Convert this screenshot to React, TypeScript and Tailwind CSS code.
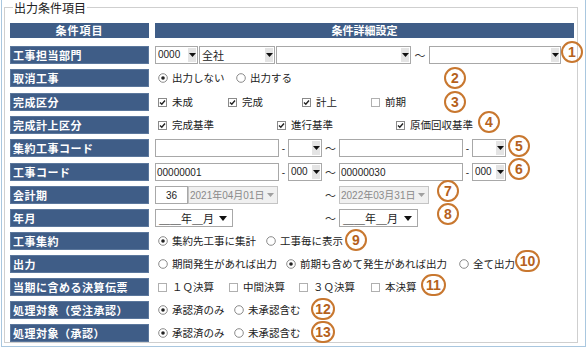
import React from 'react'

const jp = "font-['Noto_Sans_CJK_JP',sans-serif]"
const num = "font-['Liberation_Sans','Noto_Sans_CJK_JP',sans-serif]"

function Arrow({ color = '#111' }: { color?: string }) {
  return (
    <svg width="7" height="4" viewBox="0 0 7 4">
      <polygon points="0,0 7,0 3.5,4" fill={color} />
    </svg>
  )
}

function Select({ w, value, text = 'text-[11px]' }: { w: string; value?: string; text?: string }) {
  return (
    <div className={`${w} h-[18px] shrink-0 border border-[#a8a8a8] bg-white flex items-center`}>
      <span className={`flex-1 pl-[2px] text-[#222] ${text} leading-[14px] whitespace-nowrap overflow-hidden`}>{value}</span>
      <span className="w-[8px] h-[14px] mr-px bg-[#e4e4e4] flex items-center justify-center">
        <Arrow />
      </span>
    </div>
  )
}

function Input({ w, value, center }: { w: string; value?: string; center?: boolean }) {
  return (
    <div
      className={`${w} h-[18px] shrink-0 border border-[#a8a8a8] bg-white flex items-center ${center ? 'justify-center' : 'pl-[1px]'} ${num} text-[10px] text-[#222]`}
    >
      {value}
    </div>
  )
}

function DateSelect({ value }: { value: string }) {
  return (
    <div className={`w-[90px] h-[18px] shrink-0 border border-[#c4c4c4] bg-[#f0f0f0] flex items-center ${num} text-[10px] text-[#8a8a8a]`}>
      <span className="flex-1 pl-[1px]">{value}</span>
      <span className="w-[10px] flex items-center justify-center mr-[2px]">
        <Arrow color="#a0a0a0" />
      </span>
    </div>
  )
}

function YmSelect({ w }: { w: string }) {
  return (
    <div className={`${w} h-[18px] shrink-0 border border-[#a8a8a8] bg-white flex items-center ${jp} text-[11px] text-[#222]`}>
      <span className="flex-1 pl-[3px]">＿＿年＿月</span>
      <span className="w-[12px] flex items-center justify-center mr-[3px]">
        <svg width="8" height="5" viewBox="0 0 8 5">
          <polygon points="0,0 8,0 4,5" fill="#111" />
        </svg>
      </span>
    </div>
  )
}

function Check({ on, label, w }: { on?: boolean; label: string; w?: string }) {
  return (
    <div className={`${w ?? ''} shrink-0 flex items-center gap-[5px]`}>
      <svg width="9" height="9" viewBox="0 0 9 9">
        <rect x="0.5" y="0.5" width="8" height="8" fill="#fff" stroke={on ? '#8a8a8a' : '#b0b0b0'} />
        {on && <path d="M2 4.5 L3.8 6.3 L7 2.5" stroke="#222" strokeWidth="1.4" fill="none" />}
      </svg>
      <span className={`${jp} text-[10.5px] text-[#222] leading-none`}>{label}</span>
    </div>
  )
}

function Radio({ on, label, w }: { on?: boolean; label: string; w?: string }) {
  return (
    <div className={`${w ?? ''} shrink-0 flex items-center gap-[4px]`}>
      <svg width="10" height="10" viewBox="0 0 10 10">
        <circle cx="5" cy="5" r="4.3" fill="#fff" stroke="#8a8a8a" />
        {on && <circle cx="5" cy="5" r="1.8" fill="#222" />}
      </svg>
      <span className={`${jp} text-[10.5px] text-[#222] leading-none`}>{label}</span>
    </div>
  )
}

function Tilde({ w = 'w-[17px]' }: { w?: string }) {
  return <span className={`${w} shrink-0 text-center ${jp} text-[11px] text-[#333]`}>～</span>
}

function Dash() {
  return <span className={`w-[9px] shrink-0 text-center ${num} text-[10px] text-[#333]`}>-</span>
}

function Row({ label, children, extra }: { label: string; children: React.ReactNode; extra?: string }) {
  return (
    <div className={`flex h-[18px] gap-[6px] ${extra ?? ''}`}>
      <div className={`w-[139px] shrink-0 bg-[#3f5d87] border border-[#5b779c] flex items-center pl-[2px] ${jp} text-[11px] font-bold text-white tracking-[0.5px]`}>
        {label}
      </div>
      <div className="flex-1 flex items-center">{children}</div>
    </div>
  )
}

const marks: { n: string; cls: string }[] = [
  { n: '1', cls: 'left-[561px] top-[41px] w-[22px]' },
  { n: '2', cls: 'left-[444px] top-[67px] w-[22px]' },
  { n: '3', cls: 'left-[444px] top-[91px] w-[22px]' },
  { n: '4', cls: 'left-[478px] top-[111px] w-[22px]' },
  { n: '5', cls: 'left-[508px] top-[135px] w-[22px]' },
  { n: '6', cls: 'left-[508px] top-[158px] w-[22px]' },
  { n: '7', cls: 'left-[437px] top-[180px] w-[22px]' },
  { n: '8', cls: 'left-[437px] top-[203px] w-[22px]' },
  { n: '9', cls: 'left-[345px] top-[229px] w-[22px]' },
  { n: '10', cls: 'left-[515px] top-[250px] w-[25px]' },
  { n: '11', cls: 'left-[421px] top-[274px] w-[25px]' },
  { n: '12', cls: 'left-[311px] top-[298px] w-[24px]' },
  { n: '13', cls: 'left-[311px] top-[321px] w-[24px]' },
]

export default function App() {
  return (
    <div className="w-[587px] h-[348px] bg-white relative overflow-hidden">
      <div className="mx-px h-[347px] border-x border-b border-[#a9c7df] pl-[2px] pr-[7px] pb-[3px]">
        <fieldset className="h-full border border-[#cfcfcf] pl-[5px] pr-[3px] pt-[8px]">
          <legend className={`ml-[3px] px-px ${jp} text-[12px] leading-[15px] text-[#222]`}>出力条件項目</legend>

          <div className="flex flex-col gap-[5px]">
            <div className="flex h-[15px] gap-[6px] mb-[3px]">
              <div className={`w-[139px] bg-[#3f5d87] flex items-center justify-center ${jp} text-[11px] font-bold text-white tracking-[1px]`}>
                条件項目
              </div>
              <div className={`flex-1 bg-[#3f5d87] flex items-center justify-center ${jp} text-[11px] font-bold text-white`}>
                条件詳細設定
              </div>
            </div>

            <Row label="工事担当部門">
              <Select w="w-[43px]" value="0000" text={`text-[10px] ${num}`} />
              <div className="w-px" />
              <Select w="w-[76px]" value="全社" text={`text-[11px] ${jp}`} />
              <div className="w-px" />
              <Select w="w-[135px]" />
              <Tilde w="w-[18px]" />
              <Select w="w-[132px]" />
            </Row>

            <Row label="取消工事">
              <div className="pl-[3px] flex items-center">
                <Radio on label="出力しない" w="w-[78px]" />
                <Radio label="出力する" />
              </div>
            </Row>

            <Row label="完成区分" extra="mt-px">
              <div className="pl-[3px] flex items-center">
                <Check on label="未成" w="w-[70px]" />
                <Check on label="完成" w="w-[74px]" />
                <Check on label="計上" w="w-[69px]" />
                <Check label="前期" />
              </div>
            </Row>

            <Row label="完成計上区分">
              <div className="pl-[3px] flex items-center">
                <Check on label="完成基準" w="w-[119px]" />
                <Check on label="進行基準" w="w-[119px]" />
                <Check on label="原価回収基準" />
              </div>
            </Row>

            <Row label="集約工事コード">
              <Input w="w-[124px]" />
              <Dash />
              <Select w="w-[34px]" />
              <Tilde />
              <Input w="w-[124px]" />
              <Dash />
              <Select w="w-[34px]" />
            </Row>

            <Row label="工事コード" extra="mt-px">
              <Input w="w-[124px]" value="00000001" />
              <Dash />
              <Select w="w-[34px]" value="000" text={`text-[10px] ${num}`} />
              <Tilde />
              <Input w="w-[124px]" value="00000030" />
              <Dash />
              <Select w="w-[34px]" value="000" text={`text-[10px] ${num}`} />
            </Row>

            <Row label="会計期">
              <Input w="w-[33px]" value="36" center />
              <DateSelect value="2021年04月01日" />
              <div className="w-[44px] shrink-0" />
              <Tilde />
              <DateSelect value="2022年03月31日" />
            </Row>

            <Row label="年月">
              <YmSelect w="w-[78px]" />
              <div className="w-[89px] shrink-0" />
              <Tilde />
              <YmSelect w="w-[79px]" />
            </Row>

            <Row label="工事集約">
              <div className="pl-[3px] flex items-center">
                <Radio on label="集約先工事に集計" w="w-[108px]" />
                <Radio label="工事毎に表示" />
              </div>
            </Row>

            <Row label="出力">
              <div className="pl-[3px] flex items-center">
                <Radio label="期間発生があれば出力" w="w-[128px]" />
                <Radio on label="前期も含めて発生があれば出力" w="w-[173px]" />
                <Radio label="全て出力" />
              </div>
            </Row>

            <Row label="当期に含める決算伝票">
              <div className="pl-[3px] flex items-center">
                <Check label="１Ｑ決算" w="w-[71px]" />
                <Check label="中間決算" w="w-[70px]" />
                <Check label="３Ｑ決算" w="w-[72px]" />
                <Check label="本決算" />
              </div>
            </Row>

            <Row label="処理対象（受注承認）">
              <div className="pl-[3px] flex items-center">
                <Radio on label="承認済のみ" w="w-[76px]" />
                <Radio label="未承認含む" />
              </div>
            </Row>

            <Row label="処理対象（承認）">
              <div className="pl-[3px] flex items-center">
                <Radio on label="承認済のみ" w="w-[76px]" />
                <Radio label="未承認含む" />
              </div>
            </Row>
          </div>
        </fieldset>
      </div>

      {marks.map((m) => (
        <span
          key={m.n}
          className={`absolute ${m.cls} h-[22px] rounded-full border-2 border-[#c8772f] flex items-center justify-center ${num} text-[14px] font-bold text-[#b5611c] leading-none`}
        >
          {m.n}
        </span>
      ))}
    </div>
  )
}
